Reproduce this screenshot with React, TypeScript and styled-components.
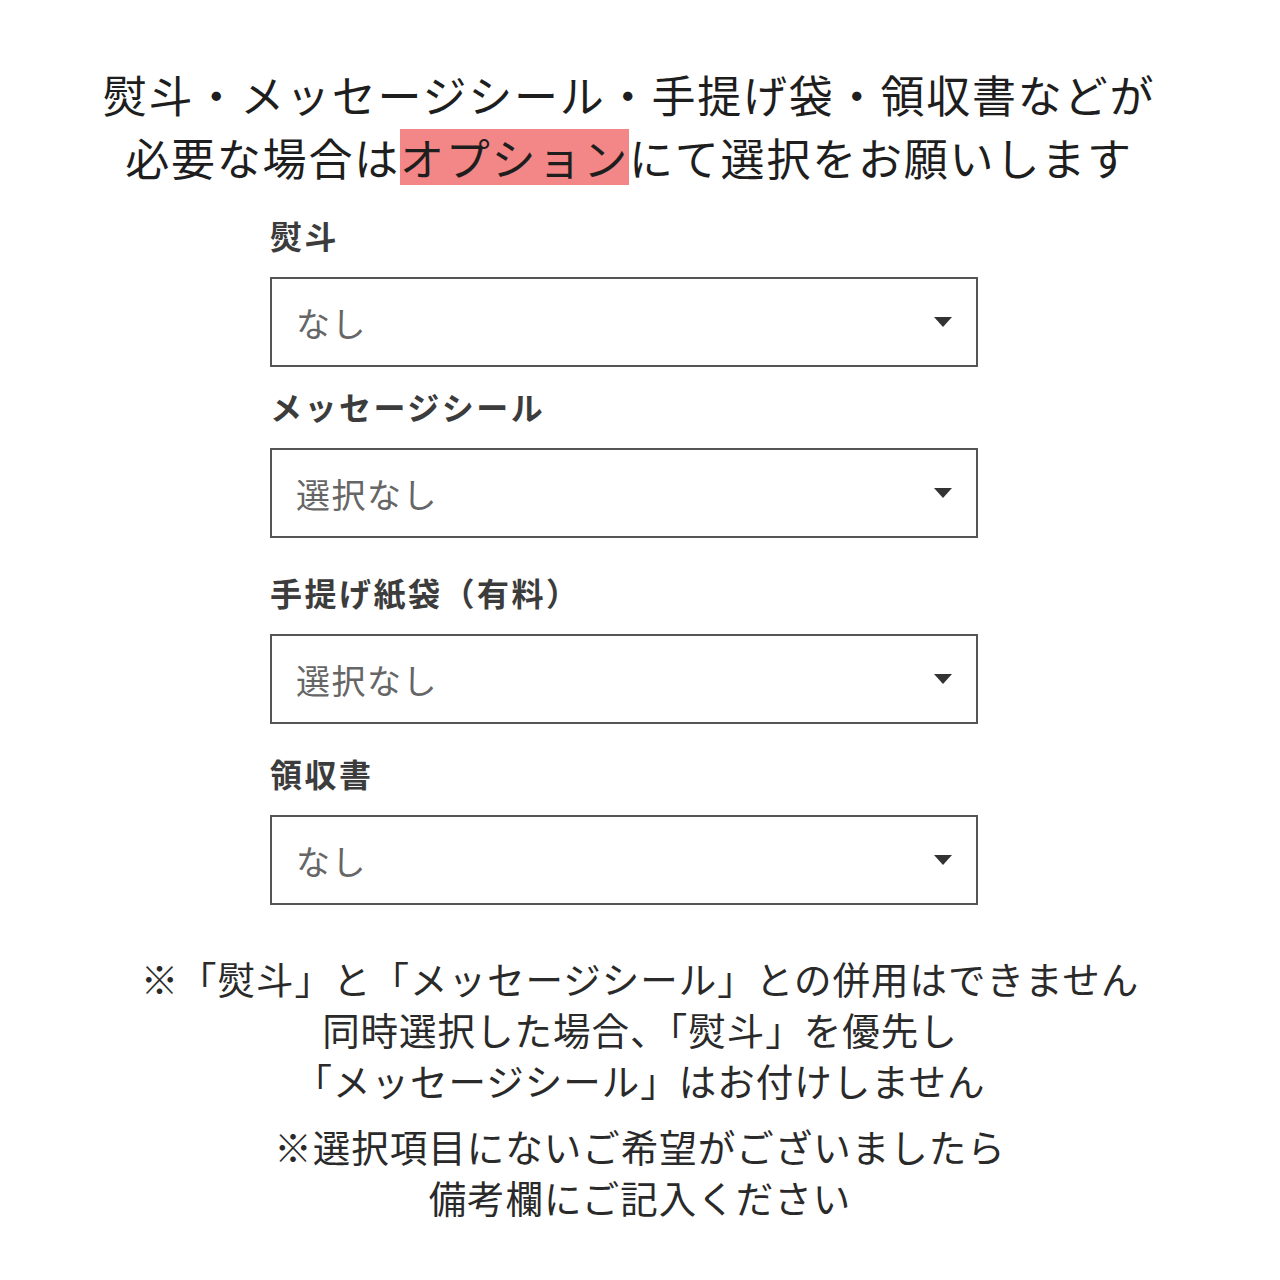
import React from 'react';
import styled, { createGlobalStyle } from 'styled-components';

const GlobalStyle = createGlobalStyle`
  html, body {
    margin: 0;
    padding: 0;
    background: #ffffff;
  }

  body {
    font-family: 'Noto Sans CJK JP', 'Noto Sans', sans-serif;
    color: #222222;
  }
`;

const Page = styled.div`
  width: 1280px;
  height: 1280px;
  box-sizing: border-box;
  padding-top: 63px;
  background: #ffffff;
  overflow: hidden;
`;

const Headline = styled.h1`
  margin: 0;
  padding-right: 22px;
  font-size: 44px;
  font-weight: 400;
  line-height: 63px;
  letter-spacing: 1.8px;
  text-align: center;
  color: #1e1e1e;
`;

const Highlight = styled.span`
  display: inline-block;
  line-height: 56px;
  background: #f38686;
`;

const Form = styled.div`
  display: flex;
  flex-direction: column;
  width: 708px;
  margin: 24px 0 0 270px;
`;

const Field = styled.div<{ $space: number }>`
  display: flex;
  flex-direction: column;
  margin-top: ${(p) => p.$space}px;
`;

const Label = styled.div`
  font-size: 32px;
  font-weight: 700;
  line-height: 44px;
  letter-spacing: 2.5px;
  margin-bottom: 20px;
  color: #3c3c3c;
`;

const SelectBox = styled.div`
  display: flex;
  align-items: center;
  justify-content: space-between;
  height: 90px;
  box-sizing: border-box;
  padding: 0 24px 0 24px;
  border: 2px solid #555555;
  background: #ffffff;
`;

const SelectValue = styled.span`
  font-size: 34px;
  font-weight: 400;
  letter-spacing: 1.5px;
  color: #666666;
`;

const Caret = styled.svg`
  width: 18px;
  height: 10px;
  fill: #333333;
`;

const Notes = styled.div`
  display: flex;
  flex-direction: column;
  gap: 15px;
  margin-top: 47px;
`;

const NoteBlock = styled.p`
  margin: 0;
  font-size: 37.5px;
  font-weight: 400;
  line-height: 51px;
  letter-spacing: 1px;
  text-align: center;
  color: #2a2a2a;
`;

const fields = [
  { label: '熨斗', value: 'なし', space: 0 },
  { label: 'メッセージシール', value: '選択なし', space: 17 },
  { label: '手提げ紙袋（有料）', value: '選択なし', space: 32 },
  { label: '領収書', value: 'なし', space: 27 },
];

export default function App() {
  return (
    <>
      <GlobalStyle />
      <Page>
        <Headline>
          熨斗・メッセージシール・手提げ袋・領収書などが
          <br />
          必要な場合は<Highlight>オプション</Highlight>にて選択をお願いします
        </Headline>

        <Form>
          {fields.map((f) => (
            <Field key={f.label} $space={f.space}>
              <Label>{f.label}</Label>
              <SelectBox>
                <SelectValue>{f.value}</SelectValue>
                <Caret viewBox="0 0 18 10">
                  <polygon points="0,0 18,0 9,10" />
                </Caret>
              </SelectBox>
            </Field>
          ))}
        </Form>

        <Notes>
          <NoteBlock>
            ※「熨斗」と「メッセージシール」との併用はできません
            <br />
            同時選択した場合、「熨斗」を優先し
            <br />
            「メッセージシール」はお付けしません
          </NoteBlock>
          <NoteBlock>
            ※選択項目にないご希望がございましたら
            <br />
            備考欄にご記入ください
          </NoteBlock>
        </Notes>
      </Page>
    </>
  );
}
